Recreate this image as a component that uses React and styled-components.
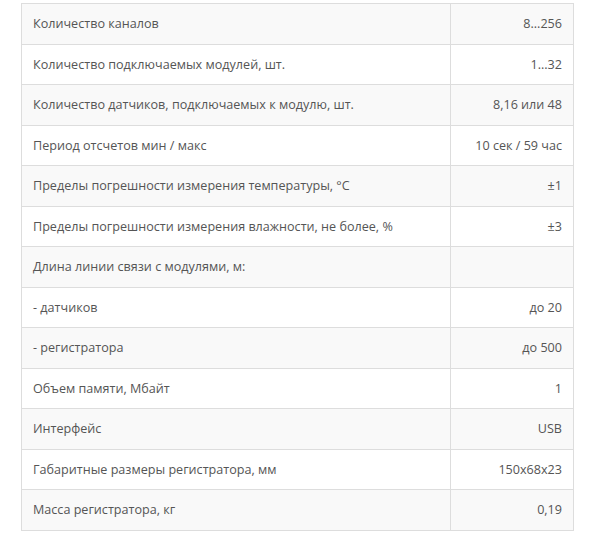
import React from "react";
import styled, { createGlobalStyle } from "styled-components";

const Global = createGlobalStyle`
  html, body { margin: 0; padding: 0; background: #fff; }
  body { font-family: "Open Sans", "Liberation Sans", sans-serif; }
`;

const Page = styled.div`
  padding: 3px 18px 0 21px;
`;

const Table = styled.table`
  width: 553px;
  border-collapse: collapse;
  border: 1px solid #dddddd;
  font-size: 12.6px;
  line-height: 19.5px;
  color: #555555;
`;

const Row = styled.tr`
  background: ${(p) => (p.$striped ? "#f9f9f9" : "#ffffff")};
`;

const Cell = styled.td`
  border: 1px solid #dddddd;
  padding: 10px 11px 10px 11px;
  text-align: ${(p) => (p.$right ? "right" : "left")};
  width: ${(p) => (p.$right ? "100px" : "auto")};
  height: 19.5px;
  vertical-align: middle;
`;

const rows = [
  ["Количество каналов", "8...256"],
  ["Количество подключаемых модулей, шт.", "1...32"],
  ["Количество датчиков, подключаемых к модулю, шт.", "8,16 или 48"],
  ["Период отсчетов мин / макс", "10 сек / 59 час"],
  ["Пределы погрешности измерения температуры, °C", "±1"],
  ["Пределы погрешности измерения влажности, не более, %", "±3"],
  ["Длина линии связи с модулями, м:", ""],
  ["- датчиков", "до 20"],
  ["- регистратора", "до 500"],
  ["Объем памяти, Мбайт", "1"],
  ["Интерфейс", "USB"],
  ["Габаритные размеры регистратора, мм", "150x68x23"],
  ["Масса регистратора, кг", "0,19"],
];

export default function App() {
  return (
    <Page>
      <Global />
      <Table>
        <tbody>
          {rows.map(([k, v], i) => (
            <Row key={i} $striped={i % 2 === 0}>
              <Cell>{k}</Cell>
              <Cell $right>{v}</Cell>
            </Row>
          ))}
        </tbody>
      </Table>
    </Page>
  );
}
